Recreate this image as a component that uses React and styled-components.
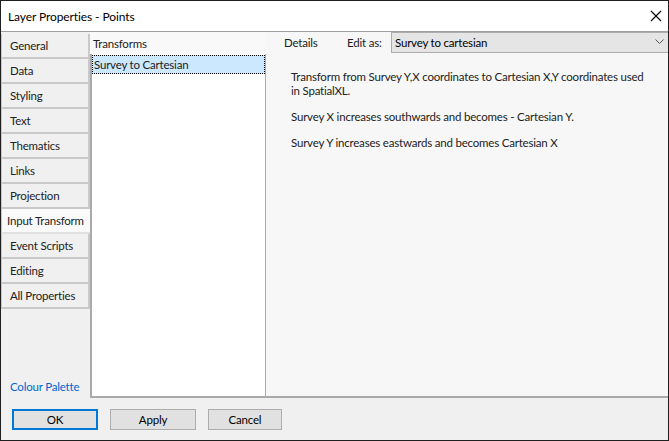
import React from 'react'
import styled, {createGlobalStyle} from "styled-components"

const GlobalStyle = createGlobalStyle`
html, body {
margin: 0;
padding: 0;
background-color: #ffffff;
}
* {
box-sizing: border-box;
}
`

const tabs = ["General", "Data", "Styling", "Text", "Thematics", "Links", "Projection", "Input Transform", "Event Scripts", "Editing", "All Properties"]

const App = () => {
    const [active, setActive] = React.useState("Input Transform")
    return (
        <>
            <GlobalStyle/>
            <Window>
                <TitleBar>
                    <Title>Layer Properties - Points</Title>
                    <Close>
                        <svg width="12" height="12" viewBox="0 0 12 12">
                            <path d="M1 1 L11 11 M11 1 L1 11" stroke="#000" strokeWidth="1.1" fill="none"/>
                        </svg>
                    </Close>
                </TitleBar>
                <Main>
                    <TabColumn>
                        <TabList>
                            {tabs.map((t)=>(
                                <Tab key={t} selected={t === active} onClick={()=>setActive(t)}>{t}</Tab>
                            ))}
                        </TabList>
                        <PaletteLink>Colour Palette</PaletteLink>
                    </TabColumn>
                    <TransformsPanel>
                        <PanelHeader>Transforms</PanelHeader>
                        <ListBox>
                            <ListItem>Survey to Cartesian</ListItem>
                        </ListBox>
                    </TransformsPanel>
                    <DetailsPanel>
                        <DetailsHeader>
                            <HeaderLabel>Details</HeaderLabel>
                            <EditLabel>Edit as:</EditLabel>
                            <Combo>
                                <span>Survey to cartesian</span>
                                <svg width="9" height="6" viewBox="0 0 9 6">
                                    <path d="M0.5 0.5 L4.5 4.5 L8.5 0.5" stroke="#555" strokeWidth="1" fill="none"/>
                                </svg>
                            </Combo>
                        </DetailsHeader>
                        <Description>
                            <Para>Transform from Survey Y,X coordinates to Cartesian X,Y coordinates used in SpatialXL.</Para>
                            <Para>Survey X increases southwards and becomes - Cartesian Y.</Para>
                            <Para>Survey Y increases eastwards and becomes Cartesian X</Para>
                        </Description>
                    </DetailsPanel>
                </Main>
                <Footer>
                    <Button primary w={86}>OK</Button>
                    <Button w={86}>Apply</Button>
                    <Button w={74}>Cancel</Button>
                </Footer>
            </Window>
        </>
    )
}

export default App

const font = `"Lato", "Liberation Sans", sans-serif`

const Window = styled.div`
width: 669px;
height: 441px;
border: 1px solid #1f1f1f;
background-color: #f0f0f0;
display: flex;
flex-direction: column;
font-family: ${font};
font-size: 11.5px;
letter-spacing: -0.2px;
color: #000;
overflow: hidden;
`
const TitleBar = styled.div`
height: 31px;
background-color: #ffffff;
display: flex;
align-items: center;
justify-content: space-between;
padding-left: 7px;
border-bottom: 1px solid #a0a0a0;
`
const Title = styled.div`
font-size: 12px;
letter-spacing: -0.1px;
padding-top: 1px;
`
const Close = styled.div`
width: 46px;
height: 30px;
display: flex;
align-items: center;
justify-content: center;
padding-left: 22px;
`
const Main = styled.div`
height: 366px;
display: flex;
`
const TabColumn = styled.div`
width: 89px;
display: flex;
flex-direction: column;
justify-content: space-between;
padding-bottom: 5px;
`
const TabList = styled.div`
display: flex;
flex-direction: column;
padding-top: 2px;
`
const Tab = styled.div`
height: 25px;
display: flex;
align-items: center;
padding-left: ${({selected})=>selected ? "5px" : "8px"};
background-color: ${({selected})=>selected ? "#fafafa" : "#f0f0f0"};
border-left: 1px solid #c8c8c8;
border-bottom: 2px solid ${({selected})=>selected ? "#e0e0e0" : "#c9c9c9"};
border-right: ${({selected})=>selected ? "none" : "2px solid #c9c9c9"};
margin-right: ${({selected})=>selected ? "-2px" : "0"};
color: #222;
cursor: pointer;
white-space: nowrap;
`
const PaletteLink = styled.div`
color: #0066cc;
padding-left: 9px;
cursor: pointer;
`
const TransformsPanel = styled.div`
width: 176px;
display: flex;
flex-direction: column;
background-color: #f9f9f9;
border-bottom: 2px solid #a9a9a9;
`
const PanelHeader = styled.div`
height: 22px;
display: flex;
align-items: center;
padding-left: 3px;
padding-top: 1px;
color: #222;
`
const ListBox = styled.div`
flex: 1;
background-color: #ffffff;
border-left: 2px solid #a9a9a9;
border-right: 1px solid #a9a9a9;
padding-top: 1px;
`
const ListItem = styled.div`
height: 19px;
display: flex;
align-items: center;
padding-left: 1px;
background-color: #cce8ff;
border: 1px dotted #000;
color: #222;
`
const DetailsPanel = styled.div`
flex: 1;
display: flex;
flex-direction: column;
background-color: #f7f7f7;
border-bottom: 2px solid #a9a9a9;
`
const DetailsHeader = styled.div`
height: 21px;
display: flex;
align-items: center;
`
const HeaderLabel = styled.div`
padding-left: 18px;
width: 81px;
color: #222;
`
const EditLabel = styled.div`
width: 44px;
color: #222;
`
const Combo = styled.div`
flex: 1;
height: 21px;
margin-top: -1px;
display: flex;
align-items: center;
justify-content: space-between;
padding: 0 4px 0 3px;
background-color: #e5e5e5;
border: 1px solid #adadad;
border-right: none;
color: #000;
`
const Description = styled.div`
padding: 17px 14px 0 25px;
color: #222;
`
const Para = styled.p`
margin: 0 0 12px 0;
line-height: 14px;
`
const Footer = styled.div`
flex: 1;
display: flex;
align-items: center;
gap: 12px;
padding-left: 11px;
padding-top: 1px;
`
const Button = styled.div`
width: ${({w})=>w}px;
height: 21px;
display: flex;
align-items: center;
justify-content: center;
background-color: #e1e1e1;
border: ${({primary})=>primary ? "2px solid #0078d7" : "1px solid #adadad"};
cursor: pointer;
`
